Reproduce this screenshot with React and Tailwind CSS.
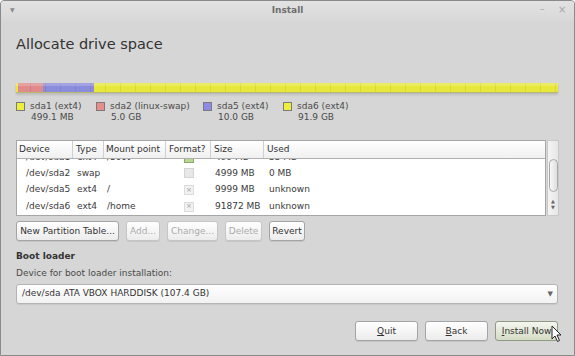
const legend = [
  { name: "sda1 (ext4)", size: "499.1 MB", color: "bg-[#eeee3c]", w: "w-[80px]" },
  { name: "sda2 (linux-swap)", size: "5.0 GB", color: "bg-[#e88c8c]", w: "w-[107px]" },
  { name: "sda5 (ext4)", size: "10.0 GB", color: "bg-[#8c8ce8]", w: "w-[80px]" },
  { name: "sda6 (ext4)", size: "91.9 GB", color: "bg-[#eeee3c]", w: "w-[80px]" },
];

const rows = [
  { dev: "/dev/sda2", type: "swap", mount: "", fmt: "empty", size: "4999 MB", used: "0 MB" },
  { dev: "/dev/sda5", type: "ext4", mount: "/", fmt: "x", size: "9999 MB", used: "unknown" },
  { dev: "/dev/sda6", type: "ext4", mount: "/home", fmt: "x", size: "91872 MB", used: "unknown" },
];

const btn =
  "h-[20px] rounded-[3px] border bg-gradient-to-b from-white to-[#ececec] shadow-[0_1px_0_rgba(0,0,0,0.08)] text-[9px] leading-[18px] whitespace-nowrap";

function FormatBox({ kind }) {
  if (kind === "green")
    return <div className="w-[10px] h-[10px] border border-[#8aa870] bg-[#b8d890]" />;
  if (kind === "empty")
    return <div className="w-[10px] h-[10px] border border-[#d4d4d4] bg-[#e8e8e8]" />;
  return (
    <div className="w-[10px] h-[10px] border border-[#dcdcdc] bg-[#f2f2f2] flex items-center justify-center text-[7px] leading-none text-[#a0a0a0]">
      ×
    </div>
  );
}

function Row({ r }) {
  return (
    <div className="flex h-[17.5px] items-center text-[9px] text-[#3a3a3a] whitespace-nowrap">
      <div className="w-[56px] pl-[9px]">{r.dev}</div>
      <div className="w-[31px] pl-[4px]">{r.type}</div>
      <div className="w-[62px] pl-[3px]">{r.mount}</div>
      <div className="w-[45px] pl-[18px]">
        <FormatBox kind={r.fmt} />
      </div>
      <div className="w-[53px] pl-[4px]">{r.size}</div>
      <div className="flex-1 pl-[5px]">{r.used}</div>
    </div>
  );
}

export default function App() {
  return (
    <div
      className="w-[575px] h-[356px] border border-[#8a8a8a] rounded-t-[4px] bg-[#d6d6d6] flex flex-col overflow-hidden text-[#3a3a3a]"
      style={{ fontFamily: '"DejaVu Sans", "Liberation Sans", sans-serif' }}
    >
      {/* title bar */}
      <div className="h-[20px] shrink-0 relative flex items-center justify-center bg-gradient-to-b from-[#e2e2e2] to-[#d8d8d8]">
        <span className="absolute left-[9px] top-[6px] text-[6px] leading-none text-[#8a8a8a]">▼</span>
        <span className="text-[9px] font-bold text-[#6e6e6e]">Install</span>
        <span className="absolute left-[539px] top-[4px] text-[9px] leading-none text-[#a0a0a0]">–</span>
        <span className="absolute left-[557px] top-[4px] text-[10px] leading-none text-[#a8a8a8]">×</span>
      </div>

      <div className="flex-1 flex flex-col px-[15px]">
        <div className="mt-[14px] text-[14.5px] leading-[18px] text-[#333]">Allocate drive space</div>

        {/* partition bar */}
        <div className="mt-[30px] w-[542px] h-[10px] shrink-0 relative flex border-b border-[#b8b870] shadow-[0_2px_2px_rgba(0,0,0,0.12)]">
          <div className="w-[2px] bg-[#e8e83c]" />
          <div className="w-[25px] bg-[#e08a8c]" />
          <div className="w-[51px] bg-[#8c8cdc]" />
          <div className="flex-1 bg-[#e8e83c]" />
          <div className="absolute inset-0 bg-[repeating-linear-gradient(90deg,transparent_0_14px,rgba(0,0,0,0.07)_14px_15px)]" />
          <div className="absolute inset-x-0 top-0 h-[3px] bg-white/20" />
        </div>

        {/* legend */}
        <div className="mt-[8px] flex">
          {legend.map((l) => (
            <div key={l.name} className={`${l.w} flex`}>
              <div className={`w-[9px] h-[9px] mt-[1px] shrink-0 border border-[#7a7a7a] ${l.color}`} />
              <div className="ml-[5px] text-[9px] leading-[11px] text-[#4a4a4a] whitespace-nowrap">
                <div>{l.name}</div>
                <div className="pl-px">{l.size}</div>
              </div>
            </div>
          ))}
        </div>

        {/* table */}
        <div className="mt-[17px] flex">
          <div className="w-[530px] h-[76px] border border-[#a6a6a6] bg-white flex flex-col overflow-hidden">
            <div className="h-[18px] shrink-0 flex text-[9px] leading-[17px] text-[#333] border-b border-[#b0b0b0] bg-gradient-to-b from-white to-[#f0f0f0] whitespace-nowrap">
              <div className="w-[56px] pl-[2px] border-r border-[#cfcfcf]">Device</div>
              <div className="w-[31px] pl-[3px] border-r border-[#cfcfcf]">Type</div>
              <div className="w-[62px] pl-[2px] border-r border-[#cfcfcf]">Mount point</div>
              <div className="w-[45px] pl-[3px] border-r border-[#cfcfcf]">Format?</div>
              <div className="w-[53px] pl-[3px] border-r border-[#cfcfcf]">Size</div>
              <div className="flex-1 pl-[3px]">Used</div>
            </div>
            <div className="h-[6px] shrink-0 relative overflow-hidden">
              <div className="absolute -top-[10px] left-0 right-0">
                <Row r={{ dev: "/dev/sda1", type: "ext4", mount: "/boot", fmt: "green", size: "499 MB", used: "33 MB" }} />
              </div>
            </div>
            {rows.map((r) => (
              <Row key={r.dev} r={r} />
            ))}
          </div>
          <div className="ml-px w-[12px] h-[76px] border border-[#c8c8c8] bg-gradient-to-r from-[#f4f4f4] to-[#e6e6e6] flex flex-col items-center">
            <div className="mt-[18px] w-[9px] h-[33px] rounded-[5px] border border-[#a8a8a8] bg-gradient-to-r from-[#f8f8f8] to-[#dedede]" />
            <div className="mt-[6px] text-[5px] leading-[6px] text-[#666]">▲</div>
            <div className="text-[5px] leading-[6px] text-[#666]">▼</div>
          </div>
        </div>

        {/* partition buttons */}
        <div className="mt-[5px] flex gap-[7px]">
          <button className={`${btn} w-[103px] border-[#a4a4a4] text-[#333]`}>New Partition Table...</button>
          <button className={`${btn} w-[34px] border-[#c6c6c6] text-[#ababab]`}>Add...</button>
          <button className={`${btn} w-[51px] border-[#c6c6c6] text-[#ababab]`}>Change...</button>
          <button className={`${btn} w-[37px] border-[#c6c6c6] text-[#ababab]`}>Delete</button>
          <button className={`${btn} w-[36px] border-[#a4a4a4] text-[#333]`}>Revert</button>
        </div>

        <div className="mt-[9px] text-[9px] font-bold text-[#333] leading-[13px]">Boot loader</div>
        <div className="mt-[4px] text-[9px] text-[#4a4a4a] leading-[13px]">Device for boot loader installation:</div>

        <div className="mt-[4px] w-[542px] h-[20px] shrink-0 rounded-[3px] border border-[#b4b4b4] bg-gradient-to-b from-white to-[#f2f2f2] shadow-[0_1px_0_rgba(0,0,0,0.06)] flex items-center justify-between pl-[5px] pr-[4px] text-[9px] text-[#333]">
          <span>/dev/sda ATA VBOX HARDDISK (107.4 GB)</span>
          <span className="text-[7px] text-[#666]">▼</span>
        </div>

        <div className="mt-[17px] flex justify-end gap-[7px] w-[542px]">
          <button className={`${btn} w-[63px] border-[#a4a4a4] text-[#333]`}>
            <span className="underline">Q</span>uit
          </button>
          <button className={`${btn} w-[63px] border-[#a4a4a4] text-[#333]`}>
            <span className="underline">B</span>ack
          </button>
          <button className="relative h-[20px] w-[63px] rounded-[3px] border border-[#8f9a84] bg-gradient-to-b from-[#f4f6ee] to-[#d4dcc6] text-[9px] leading-[18px] text-[#333] whitespace-nowrap">
            <span className="underline">I</span>nstall Now
            <svg className="absolute left-[55px] top-[3px]" width="12" height="18" viewBox="0 0 12 18">
              <path d="M1 1 L1 14 L4 11 L6.5 16.5 L8.5 15.5 L6 10 L10 10 Z" fill="#fff" stroke="#222" strokeWidth="1" strokeLinejoin="round" />
            </svg>
          </button>
        </div>
      </div>
    </div>
  );
}
